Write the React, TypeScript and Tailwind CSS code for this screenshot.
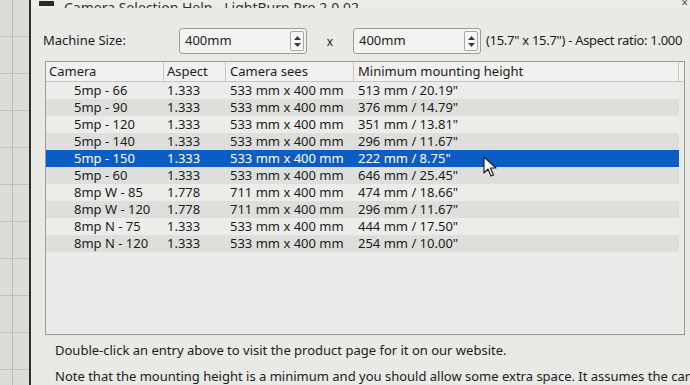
import React from 'react';

type Row = { camera: string; aspect: string; sees: string; height: string };

const rows: Row[] = [
    { camera: '5mp - 66', aspect: '1.333', sees: '533 mm x 400 mm', height: '513 mm / 20.19"' },
    { camera: '5mp - 90', aspect: '1.333', sees: '533 mm x 400 mm', height: '376 mm / 14.79"' },
    { camera: '5mp - 120', aspect: '1.333', sees: '533 mm x 400 mm', height: '351 mm / 13.81"' },
    { camera: '5mp - 140', aspect: '1.333', sees: '533 mm x 400 mm', height: '296 mm / 11.67"' },
    { camera: '5mp - 150', aspect: '1.333', sees: '533 mm x 400 mm', height: '222 mm / 8.75"' },
    { camera: '5mp - 60', aspect: '1.333', sees: '533 mm x 400 mm', height: '646 mm / 25.45"' },
    { camera: '8mp W - 85', aspect: '1.778', sees: '711 mm x 400 mm', height: '474 mm / 18.66"' },
    { camera: '8mp W - 120', aspect: '1.778', sees: '711 mm x 400 mm', height: '296 mm / 11.67"' },
    { camera: '8mp N - 75', aspect: '1.333', sees: '533 mm x 400 mm', height: '444 mm / 17.50"' },
    { camera: '8mp N - 120', aspect: '1.333', sees: '533 mm x 400 mm', height: '254 mm / 10.00"' },
];

const SELECTED = 4;

const SpinBox = ({ value }: { value: string }) => (
    <div className="w-[128px] shrink-0 h-[26px] flex items-center justify-between border border-[#9c9c9a] rounded-[3px] bg-[#f3f3f1] pl-[5px] pr-[2px]">
        <span>{value}</span>
        <div className="w-[14px] h-[20px] border border-[#a6a6a4] rounded-[2px] bg-[#f7f7f5] flex flex-col items-center justify-center gap-[3px]">
            <svg width="7" height="4" viewBox="0 0 7 4"><path d="M0 4 L3.5 0 L7 4 Z" fill="#3a3a3a" /></svg>
            <svg width="7" height="4" viewBox="0 0 7 4"><path d="M0 0 L3.5 4 L7 0 Z" fill="#3a3a3a" /></svg>
        </div>
    </div>
);

const App = () => {
    return (
        <div className="w-[690px] h-[385px] overflow-hidden flex bg-[#e6e6e3] text-[13px] text-[#1c1c1c] font-['Noto_Sans',sans-serif]">
            {/* spreadsheet behind the window */}
            <div className="w-[29px] shrink-0 bg-[#dcdcd8] bg-[linear-gradient(to_right,transparent_12px,#b9b9b5_12px,#b9b9b5_13px,transparent_13px),linear-gradient(to_bottom,transparent_36px,#c2c2be_36px)] bg-[size:29px_37px]" />

            <div className="flex-1 flex flex-col border-l-2 border-[#2e2e2e] bg-[#e9e9e6] min-w-0">
                {/* title bar, cut off at the top */}
                <div className="h-[8px] overflow-hidden flex items-end gap-[10px] pl-[8px] bg-[#ececea] relative">
                    <div className="w-[15px] h-[5px] bg-[#2a2a2a] mb-[2px]" />
                    <span className="leading-[14px] translate-y-[7px] text-[14px] text-[#333]">
                        Camera Selection Help - LightBurn Pro 2.0.02
                    </span>
                    <span className="absolute right-[2px] top-[-6px] text-[12px] text-[#555]">×</span>
                </div>

                <div className="flex flex-col pl-[12px] pr-[5px]">
                    <div className="flex items-center mt-[20px] h-[26px]">
                        <span className="w-[136px] shrink-0">Machine Size:</span>
                        <SpinBox value="400mm" />
                        <span className="w-[46px] shrink-0 text-center text-[12px] pt-[2px]">x</span>
                        <SpinBox value="400mm" />
                        <span className="ml-[5px] whitespace-nowrap tracking-[-0.3px]">(15.7" x 15.7") - Aspect ratio: 1.000</span>
                    </div>

                    {/* camera table */}
                    <div className="ml-[2px] mt-[7px] w-[640px] h-[274px] border border-[#9a9a98] bg-[#ebebe9] flex flex-col">
                        <div className="flex h-[20px] items-center bg-[#f1f1ef] border-b border-[#c6c6c4]">
                            <div className="w-[118px] pl-[3px] border-r border-[#c6c6c4] h-full flex items-center">Camera</div>
                            <div className="w-[62px] pl-[3px] border-r border-[#c6c6c4] h-full flex items-center">Aspect</div>
                            <div className="w-[128px] pl-[4px] border-r border-[#c6c6c4] h-full flex items-center">Camera sees</div>
                            <div className="flex-1 pl-[4px] border-r border-[#c6c6c4] h-full flex items-center">Minimum mounting height</div>
                            <div className="w-[5px]" />
                        </div>
                        {rows.map((r, i) => {
                            const sel = i === SELECTED;
                            return (
                                <div
                                    key={r.camera}
                                    className={
                                        sel
                                            ? 'flex h-[17px] items-center bg-[#0b5cc4] text-white mr-[5px]'
                                            : i % 2 === 1
                                                ? 'flex h-[17px] items-center bg-[#dededb] mr-[5px]'
                                                : 'flex h-[17px] items-center bg-[#ececea] mr-[5px]'
                                    }
                                >
                                    <div className="w-[118px] pl-[28px]">{r.camera}</div>
                                    <div className="w-[62px] pl-[3px]">{r.aspect}</div>
                                    <div className="w-[128px] pl-[4px]">{r.sees}</div>
                                    <div className="flex-1 pl-[4px]">{r.height}</div>
                                </div>
                            );
                        })}
                    </div>

                    <p className="ml-[12px] mt-[6px] leading-[18px]">
                        Double-click an entry above to visit the product page for it on our website.
                    </p>
                    <p className="ml-[12px] mt-[8px] leading-[18px] whitespace-nowrap">
                        Note that the mounting height is a minimum and you should allow some extra space. It assumes the camera
                    </p>
                </div>
            </div>

            {/* mouse pointer over the selected row */}
            <svg className="absolute left-[483px] top-[156px]" width="14" height="22" viewBox="0 0 14 22">
                <path d="M1 1 L1 17 L5 13 L8 20 L10.5 19 L7.5 12 L13 12 Z" fill="#ffffff" stroke="#1a1a1a" strokeWidth="1.1" strokeLinejoin="round" />
            </svg>
        </div>
    );
};

export default App;
